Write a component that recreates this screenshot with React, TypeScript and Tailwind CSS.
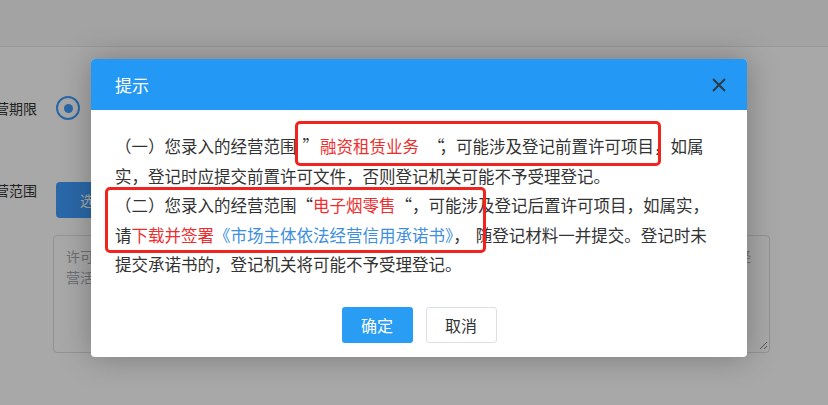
import React from 'react';

const cjk = "font-['Noto_Sans_CJK_SC',sans-serif]";

const App: React.FC = () => {
  return (
    <div lang="zh-CN" className={`relative w-[828px] h-[405px] overflow-hidden bg-white ${cjk}`}>
      {/* Page behind the dialog */}
      <div className="h-[47px] bg-[#f8f8f8] border-b border-[#e8e8e8]" />
      <div className="pt-[49px]">
        <div className="flex items-center h-[24px]">
          <div className="w-[37px] flex justify-end whitespace-nowrap text-[14px] text-[#333]">经营期限</div>
          <div className="ml-[19px] w-[24px] h-[24px] rounded-full border-2 border-[#409eff] flex items-center justify-center">
            <div className="w-[9px] h-[9px] rounded-full bg-[#409eff]" />
          </div>
        </div>
        <div className="flex items-start mt-[62px]">
          <div className="w-[37px] flex justify-end whitespace-nowrap text-[14px] leading-[17px] text-[#333]">经营范围</div>
          <div className="ml-[19px] h-[36px] w-[130px] rounded-[4px] bg-[#409eff] text-white text-[14px] flex items-center pl-[24px]">
            选择经营范围
          </div>
        </div>
        <div className="relative ml-[53px] mt-[17px] w-[717px] h-[118px] rounded-[4px] border border-[#dcdfe6] px-[12px] pt-[10px] text-[14px] leading-[21px] text-[#a8abb2]">
          <p className="flex justify-between pr-[6px]">
            <span>许可项目：依法须经批准的项目，经相关部门批准后方可开展</span>
            <span>经</span>
          </p>
          <p>营活动，具体经营项目以相关部门批准文件或许可证件为准</p>
          <svg className="absolute right-[1px] bottom-[2px]" width="9" height="9" viewBox="0 0 9 9">
            <path d="M8 1 L1 8 M8 5 L5 8" stroke="#888" strokeWidth="1" />
          </svg>
        </div>
      </div>

      {/* Mask */}
      <div className="absolute inset-0 bg-black/[0.34]" />

      {/* Dialog */}
      <div className="absolute left-[91px] top-[59px] w-[656px] rounded-[4px] bg-white overflow-hidden shadow-[0_0_32px_rgba(0,0,0,0.28)]">
        <div className="h-[51px] bg-[#2399f5] flex items-center justify-between pl-[24px] pr-[21px]">
          <span className="text-[17px] text-white">提示</span>
          <svg width="14" height="14" viewBox="0 0 14 14">
            <path d="M1 1 L13 13 M13 1 L1 13" stroke="#2d3a48" strokeWidth="2" />
          </svg>
        </div>

        <div className="relative px-[24px] pt-[22px] text-[16.5px] leading-[29.5px] text-[#333]">
          <p>
            （一）您录入的经营范围
            <span className="inline-block w-[23.5px] pl-[6px]">”</span>
            <span className="text-[#ee2f2f]">融资租赁业务</span>
            <span className="relative left-[5px] inline-block w-[20.5px] text-right">“</span>
            ，可能涉及登记前置许可项目，如属实，登记时应提交前置许可文件，否则登记机关可能不予受理登记。
          </p>
          <p>
            （二）您录入的经营范围
            <span className="inline-block w-[16.5px] text-right">“</span>
            <span className="text-[#ee2f2f]">电子烟零售</span>
            <span className="inline-block w-[16.5px] text-right">“</span>
            ，可能涉及登记后置许可项目，如属实，请
            <span className="text-[#ee2f2f]">下载并签署</span>
            <span className="text-[#3d8fe0]">《市场主体依法经营信用承诺书》</span>
            ，<span className="inline-block w-[6px]" />随登记材料一并提交。登记时未提交承诺书的，登记机关将可能不予受理登记。
          </p>

          {/* annotation boxes */}
          <div className="absolute left-[204px] top-[11px] w-[366px] h-[45px] rounded-[5px] border-[3.5px] border-[#f2221e]" />
          <div className="absolute left-[14px] top-[77px] w-[381px] h-[66px] rounded-[5px] border-[3.5px] border-[#f2221e]" />
        </div>

        <div className="flex justify-center gap-[13px] pt-[27px] pb-[14px]">
          <button className="w-[71px] h-[36px] rounded-[3px] bg-[#299df4] text-white text-[16px]">确定</button>
          <button className="w-[71px] h-[36px] rounded-[3px] border border-[#dcdfe6] bg-white text-[#333] text-[16px]">取消</button>
        </div>
      </div>
    </div>
  );
};

export default App;
